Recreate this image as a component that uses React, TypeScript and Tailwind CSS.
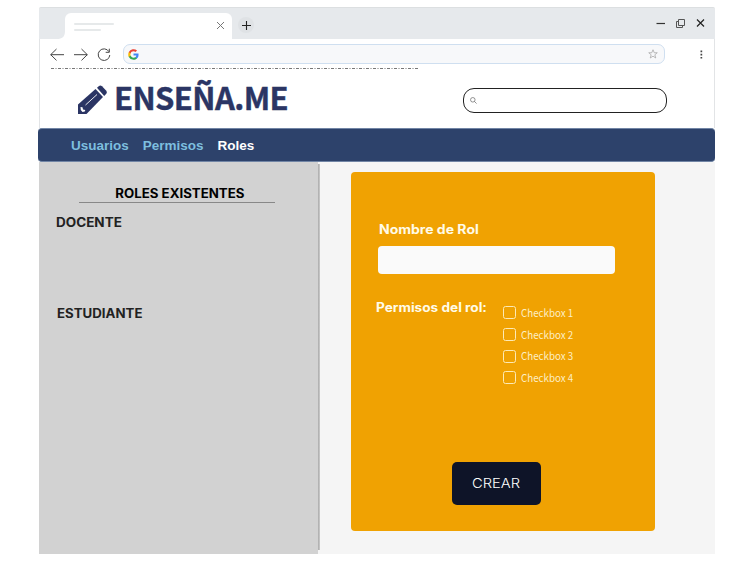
import React from "react";

const permissions = ["Checkbox 1", "Checkbox 2", "Checkbox 3", "Checkbox 4"];

function TitleBar() {
  return (
    <div className="flex h-8 shrink-0 justify-between rounded-t-[2px] border-t border-[#dcdfe1] bg-[#e6e9ec]">
      <div className="flex pt-[5px]">
        <svg className="mt-[18px] ml-[18px] h-2 w-2 shrink-0" viewBox="0 0 8 8" fill="#fff">
          <path d="M8 0v8H0c5 0 8-2 8-8z" />
        </svg>
        <div className="flex h-[26px] w-[167px] justify-between rounded-t-[6px] bg-white pr-[7px] pl-[9px]">
          <div className="flex flex-col gap-1 pt-[10px]">
            <div className="h-[2px] w-10 rounded bg-[#e6e9ea]" />
            <div className="h-[2px] w-[27px] rounded bg-[#e6e9ea]" />
          </div>
          <svg className="mt-[8px] h-[9px] w-[9px]" viewBox="0 0 9 9" fill="none" stroke="#777" strokeWidth="1">
            <path d="M1 1l7 7M8 1l-7 7" />
          </svg>
        </div>
        <div className="mt-[4px] ml-[6px] flex h-4 w-4 items-center justify-center rounded-full bg-[#dfe2e5]">
          <svg className="h-[9px] w-[9px]" viewBox="0 0 9 9" stroke="#222" strokeWidth="1.1">
            <path d="M0 4.500h9M4.500 0v9" />
          </svg>
        </div>
      </div>
      <div className="flex gap-[10px] pt-[10px] pr-[10px]">
        <svg className="h-[9px] w-[9px]" viewBox="0 0 9 9" stroke="#333" strokeWidth="1.2">
          <path d="M.5 5.500h8.500" />
        </svg>
        <svg className="h-[11px] w-[11px]" viewBox="0 0 11 11" fill="none" stroke="#555" strokeWidth="1">
          <path d="M3.500 1.500h6v6h-6zM3.500 3.500h-2v6h6v-2" />
        </svg>
        <svg className="h-[9px] w-[9px]" viewBox="0 0 9 9" stroke="#222" strokeWidth="1.2">
          <path d="M1 1.500l7 7M8 1.500l-7 7" />
        </svg>
      </div>
    </div>
  );
}

function AddressBar() {
  return (
    <div className="flex h-[29px] shrink-0 border-x border-[#e2e4e6] pt-[5px]">
      <svg className="mt-[4px] ml-[10px] h-[14px] w-[61px] shrink-0" viewBox="0 0 61 14" fill="none" stroke="#454545" strokeWidth="1">
        <path d="M14 6.700H.7M6.500 1L.7 6.700l5.800 5.700M24 6.700h13.300M31.500 1l5.800 5.700-5.800 5.700" />
        <path d="M59 3.700A5.800 5.800 0 1 0 59.800 7M59.300.7v3.600h-3.600" />
      </svg>
      <div className="ml-[12px] flex h-5 w-[542px] justify-between rounded-[7px] border border-[#cfdff0] bg-[#f7f8fa] pr-[6px] pl-[4px]">
        <svg className="mt-[4px] h-[11px] w-[11px]" viewBox="0 0 24 24">
          <path fill="#4285f4" d="M23 12.300c0-.8-.1-1.600-.2-2.300H12v4.400h6.200a5.300 5.300 0 0 1-2.300 3.500v2.900h3.700c2.200-2 3.400-5 3.400-8.500z" />
          <path fill="#34a853" d="M12 23.500c3.100 0 5.700-1 7.600-2.800l-3.700-2.900c-1 .7-2.300 1.100-3.900 1.100-3 0-5.500-2-6.400-4.700H1.800v3A11.500 11.500 0 0 0 12 23.500z" />
          <path fill="#fbbc05" d="M5.600 14.200a7 7 0 0 1 0-4.400v-3H1.800a11.500 11.500 0 0 0 0 10.400z" />
          <path fill="#ea4335" d="M12 5.100c1.700 0 3.200.6 4.400 1.700l3.300-3.300A11.500 11.500 0 0 0 1.800 6.800l3.800 3C6.500 7.100 9 5.100 12 5.100z" />
        </svg>
        <svg className="mt-[4px] h-[10px] w-[10px]" viewBox="0 0 20 20" fill="none" stroke="#aaa" strokeWidth="1.600">
          <path d="M10 1.500l2.500 6h6l-4.800 4 1.800 6.500-5.500-3.700L4.500 18l1.800-6.500-4.800-4h6z" />
        </svg>
      </div>
      <svg className="mt-[6px] ml-[35px] h-[9px] w-[3px]" viewBox="0 0 3 9" fill="#444">
        <path d="M.5.500h1.700v1.700H.5zM.5 3.700h1.700v1.700H.5zM.5 6.900h1.700v1.700H.5z" />
      </svg>
    </div>
  );
}

function Header() {
  return (
    <header className="flex h-[60px] shrink-0 flex-col border-x border-[#e2e4e6]">
      <svg className="ml-[11px] h-[1px] w-[367px] shrink-0" viewBox="0 0 367 1">
        <path d="M0 .5h367" stroke="#777" strokeWidth="1" strokeDasharray="3 1.500 1 1.500" />
      </svg>
      <div className="flex justify-between pr-[47px] pl-[37px]">
        <div className="flex">
          <svg className="mt-[16px] h-[30px] w-[31px]" viewBox="0 0 31 30">
            <path fill="#2b3564" d="M1 19.500L18.500 4l7.500 8L9.500 29H1z" />
            <path fill="#2b3564" d="M20 2.700l2-1.700q1.500-1 3 .3l4.300 4.500q1.200 1.500 0 3L27.200 11z" />
            <path d="M8.500 20L20 9.500" stroke="#fff" strokeWidth=".9" />
            <path d="M3.500 22l2 .2.500 2.300 2.300.4-.5 1.600-2.300.5-1.700-2z" fill="#fff" />
          </svg>
          <h1 className="ml-[6px] h-[50px] pt-[3px] font-['Noto_Sans_CJK_SC',sans-serif] text-[31px] leading-[50px] font-bold tracking-[-0.600px] whitespace-nowrap text-[#2b3564] [-webkit-text-stroke:0.4px_#2b3564]">
            ENSEÑA.ME
          </h1>
        </div>
        <div className="mt-[19px] flex h-[25px] w-[204px] rounded-[11px] border border-[#222] bg-white pt-[8px] pl-[6px]">
          <svg className="h-[7px] w-[7px]" viewBox="0 0 8 8" fill="none" stroke="#666" strokeWidth=".8">
            <circle cx="3.200" cy="3.200" r="2.600" />
            <path d="M5 5l2.500 2.500" />
          </svg>
        </div>
      </div>
    </header>
  );
}

function Nav() {
  return (
    <nav className="-ml-px flex h-[34px] shrink-0 gap-[14px] rounded-[4px] border-y border-[#7185a5] bg-[#2d426b] pl-[33px] font-['Liberation_Sans',sans-serif] text-[13.500px] leading-[33px] font-bold text-[#7dbfdf]">
      <a>Usuarios</a>
      <a>Permisos</a>
      <a className="text-white">Roles</a>
    </nav>
  );
}

function RoleList() {
  return (
    <aside className="flex w-[279px] shrink-0 flex-col items-start bg-[#d2d2d2] font-['Inter',sans-serif] text-[12.500px] leading-4 font-bold text-[#222]">
      <div className="mt-[24px] ml-[40px] flex h-[17px] w-[196px] justify-center border-b border-[#888] pl-[5px] text-black">
        <h2 className="scale-x-[1.060] whitespace-nowrap">ROLES EXISTENTES</h2>
      </div>
      <p className="mt-[12px] ml-[17px] origin-left scale-x-[1.08]">DOCENTE</p>
      <p className="mt-[75px] ml-[18px] origin-left scale-x-[1.06]">ESTUDIANTE</p>
    </aside>
  );
}

function RoleForm() {
  return (
    <form className="mt-[10px] ml-[31px] flex h-[359px] w-[304px] flex-col rounded-[4px] bg-[#f0a202] font-['Inter',sans-serif]">
      <label className="mt-[50px] ml-[28px] origin-left scale-x-[1.12] self-start text-[12.500px] leading-4 font-bold text-[#fffbe8]">Nombre de Rol</label>
      <div className="mt-[8px] ml-[27px] h-[28px] w-[237px] rounded-[4px] bg-[#fafafa]" />
      <div className="mt-[26px] ml-[25px] flex">
        <p className="w-[127px] origin-left scale-x-[1.090] text-[12.500px] leading-4 font-bold whitespace-nowrap text-[#fffbe8]">Permisos del rol:</p>
        <div className="mt-[2px] flex flex-col">
          {permissions.map((name) => (
            <label key={name} className="flex h-[21.700px] items-center gap-[5px] font-['Noto_Sans_CJK_SC',sans-serif] text-[11px] leading-4 text-[#fdeec5]">
              <span className="h-[13px] w-[13px] rounded-[2.500px] border-[1.500px] border-[#fdeab5]" />
              <span className="mb-[2px] origin-left scale-x-[0.890]">{name}</span>
            </label>
          ))}
        </div>
      </div>
      <button type="button" className="mt-[73px] ml-[101px] flex h-[43px] w-[89px] items-center justify-center rounded-[5px] bg-[#0e1428] text-[13.500px] font-light text-white">
        <span className="scale-x-[1.090]">CREAR</span>
      </button>
    </form>
  );
}

export default function App() {
  return (
    <div className="h-[571px] w-[737px] bg-white pt-[7px] pl-[38px]">
      <div className="ml-px flex h-[546.500px] w-[676px] flex-col">
        <TitleBar />
        <AddressBar />
        <Header />
        <Nav />
        <main className="flex min-h-0 flex-1 bg-[#f5f5f5]">
          <RoleList />
          <div className="mt-[2px] mb-[4px] w-[2px] shrink-0 bg-linear-to-r from-[#aaa] to-[#ccc]" />
          <RoleForm />
        </main>
      </div>
    </div>
  );
}
